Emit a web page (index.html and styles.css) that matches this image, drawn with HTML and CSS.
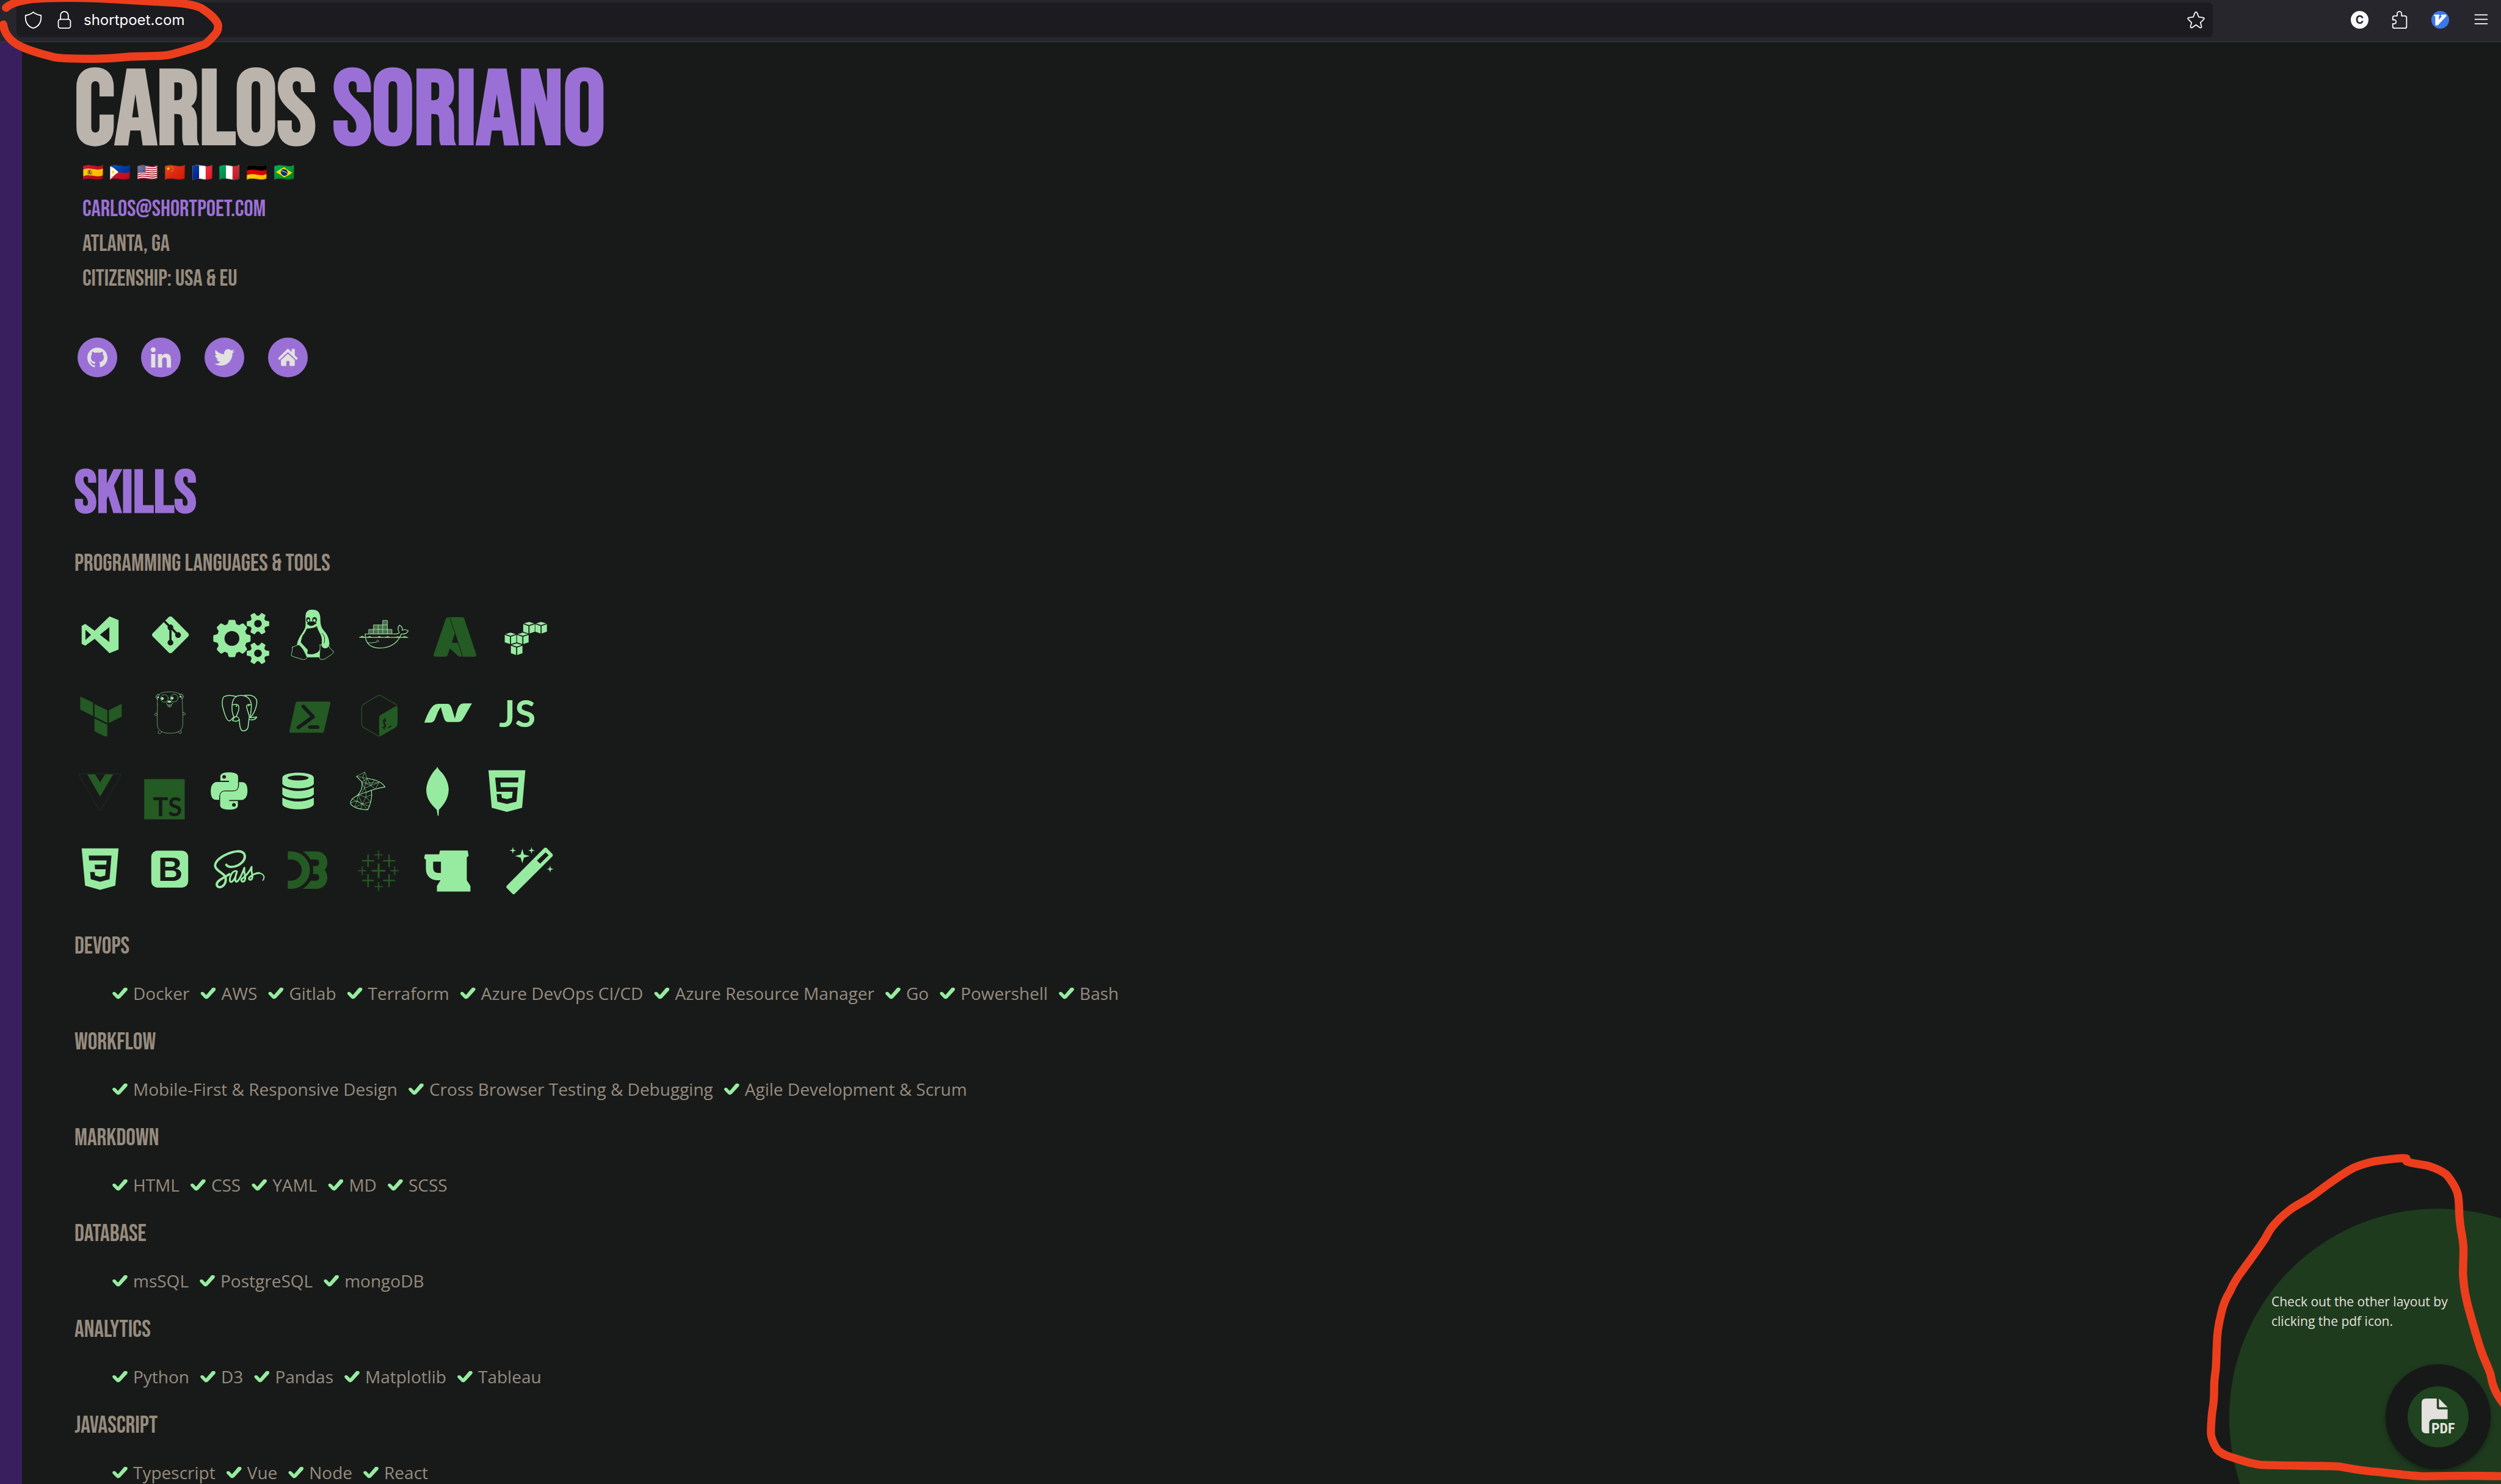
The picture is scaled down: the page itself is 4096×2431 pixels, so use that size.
FILE: index.html
```html
<!DOCTYPE html>
<html lang="en">
<head>
<meta charset="utf-8">
<meta name="viewport" content="width=device-width, initial-scale=1">
<title>Carlos Soriano</title>
<link rel="stylesheet" href="styles.css">
</head>
<body>
<div class="window">
  <header class="toolbar">
    <div class="address">
      <button class="tool" type="button" aria-label="Tracking protection"><svg viewBox="0 0 32 32"><path d="M16 2C20 6 25 7 30 8C31 20 26 28 16 31C6 28 1 20 2 8C7 7 12 6 16 2Z"/></svg></button>
      <button class="tool" type="button" aria-label="Site information"><svg viewBox="0 0 32 32"><path d="M9 15V8a7 7 0 0 1 14 0v7"/><rect x="5" y="15" width="22" height="16" rx="4"/></svg></button>
      <input class="url" type="text" value="shortpoet.com" aria-label="Address">
      <button class="tool" type="button" aria-label="Bookmark this page"><svg viewBox="0 0 32 32"><path d="M14 3.500Q16 0 18 3.500L21 11L29 12Q32 13 30 15L24 21L26 28Q26 31 23 30L16 25L9 30Q6 31 6 28L8 21L2 15Q0 13 3 12L11 11Z"/></svg></button>
    </div>
    <nav class="extensions" aria-label="Extensions">
      <button class="tool" type="button" aria-label="Account"><svg viewBox="0 0 32 32"><circle class="solid" cx="16" cy="16" r="16"/><text class="badge-letter" x="16" y="23">C</text></svg></button>
      <button class="tool" type="button" aria-label="Extensions"><svg viewBox="0 0 32 32"><path d="M3 16V12Q3 9 6 9H11V5a4 4 0 0 1 8 0V9H25Q28 9 28 12V28Q28 31 25 31H6Q3 31 3 28V23H7a4 4 0 0 0 0-7Z"/></svg></button>
      <button class="tool" type="button" aria-label="Vimium"><svg viewBox="0 0 32 32"><circle class="blue" cx="16" cy="16" r="16"/><path class="solid" d="M5 6.500H14.500V9.500H13.500V16L19 9.500H17.500V6.500H27V9.500L11.500 26H7V9.500H5Z"/></svg></button>
      <button class="tool" type="button" aria-label="Menu"><svg viewBox="0 0 32 32"><path d="M6 7H28M6 15H28M6 23H28"/></svg></button>
    </nav>
  </header>

  <div class="page">
    <div class="rail"></div>
    <main class="resume">
      <h1 class="name">Carlos <span class="accent">Soriano</span></h1>
      <div class="contact">
        <div class="flags"><span>🇪🇸</span><span>🇵🇭</span><span>🇺🇸</span><span>🇨🇳</span><span>🇫🇷</span><span>🇮🇹</span><span>🇩🇪</span><span>🇧🇷</span></div>
        <a class="line accent" href="mailto:carlos@shortpoet.com">carlos@shortpoet.com</a>
        <p class="line">Atlanta, GA</p>
        <p class="line">Citizenship: USA &amp; EU</p>
      </div>
      <nav class="social" aria-label="Profiles">
        <a href="#github" aria-label="GitHub"><svg viewBox="0 0 24 24"><path d="M12 .297c-6.63 0-12 5.373-12 12 0 5.303 3.438 9.800 8.205 11.385.6.113.82-.258.82-.577 0-.285-.01-1.040-.015-2.040-3.338.724-4.042-1.610-4.042-1.610C4.422 18.070 3.633 17.700 3.633 17.700c-1.087-.744.084-.729.084-.729 1.205.084 1.838 1.236 1.838 1.236 1.070 1.835 2.809 1.305 3.495.998.108-.776.417-1.305.76-1.605-2.665-.3-5.466-1.332-5.466-5.930 0-1.310.465-2.380 1.235-3.220-.135-.303-.54-1.523.105-3.176 0 0 1.005-.322 3.300 1.230.96-.267 1.980-.399 3-.405 1.020.006 2.040.138 3 .405 2.280-1.552 3.285-1.230 3.285-1.230.645 1.653.24 2.873.12 3.176.765.84 1.230 1.910 1.230 3.220 0 4.610-2.805 5.625-5.475 5.920.42.36.81 1.096.81 2.220 0 1.606-.015 2.896-.015 3.286 0 .315.21.69.825.57C20.565 22.092 24 17.592 24 12.297c0-6.627-5.373-12-12-12"/></svg></a>
        <a href="#linkedin" aria-label="LinkedIn"><svg viewBox="0 0 448 448"><path d="M100.280 448H7.400V148.900h92.880zM53.790 108.100C24.090 108.100 0 83.500 0 53.800a53.790 53.790 0 0 1 107.580 0c0 29.700-24.100 54.300-53.790 54.300zM447.900 448h-92.680V302.400c0-34.700-.7-79.200-48.290-79.200-48.290 0-55.690 37.700-55.690 76.700V448h-92.780V148.900h89.080v40.800h1.300c12.400-23.500 42.690-48.300 87.880-48.300 94 0 111.280 61.900 111.280 142.300V448z"/></svg></a>
        <a href="#twitter" aria-label="Twitter"><svg viewBox="0 0 512 512"><path d="M459.370 151.716c.325 4.548.325 9.097.325 13.645 0 138.720-105.583 298.558-298.558 298.558-59.452 0-114.680-17.219-161.137-47.106 8.447.974 16.568 1.299 25.340 1.299 49.055 0 94.213-16.568 130.274-44.832-46.132-.975-84.792-31.188-98.112-72.772 6.498.974 12.995 1.624 19.818 1.624 9.421 0 18.843-1.300 27.614-3.573-48.081-9.747-84.143-51.980-84.143-102.985v-1.299c13.969 7.797 30.214 12.670 47.431 13.319-28.264-18.843-46.781-51.005-46.781-87.391 0-19.492 5.197-37.360 14.294-52.954 51.655 63.675 129.300 105.258 216.365 109.807-1.624-7.797-2.599-15.918-2.599-24.040 0-57.828 46.782-104.934 104.934-104.934 30.213 0 57.502 12.670 76.670 33.137 23.715-4.548 46.456-13.320 66.599-25.340-7.798 24.366-24.366 44.833-46.132 57.827 21.117-2.273 41.584-8.122 60.426-16.243-14.292 20.791-32.161 39.308-52.628 54.253z"/></svg></a>
        <a href="#home" aria-label="Home"><svg viewBox="0 0 38 38"><path d="M19 3Q20 3 21 4L26 9V4Q26 3 27 3H31Q32 3 32 4V15L37 20Q38 21 37 22L36 23Q35 24 34 23L19 9L4 23Q3 24 2 23L1 22Q0 21 1 20L17 4Q18 3 19 3ZM19 12L32 24V33Q32 35 30 35H22V26H16V35H8Q6 35 6 33V24Z"/></svg></a>
      </nav>

      <section class="skills">
        <h2 class="accent">Skills</h2>
        <h3>Programming Languages &amp; Tools</h3>
        <div class="icons">
          <svg viewBox="44 -9 384 432"><path fill-rule="evenodd" d="M90 157L110 146L162 184L244 105L294 125V288L244 308L162 229L110 267L90 257ZM111 178V235L142 207ZM191 206L243 164V247Z"/></svg>
          <svg viewBox="428 -9 384 432"><path d="M570 109Q580 100 590 109L677 197Q687 207 677 217L590 304Q580 313 570 304L483 217Q473 207 483 197Z"/><path class="cut-line" stroke-width="12" d="M540 125L622 207M580 165V248"/><circle class="cut" cx="580" cy="166" r="16"/><circle class="cut" cx="622" cy="208" r="16"/><circle class="cut" cx="580" cy="250" r="16"/></svg>
          <svg viewBox="812 -9 384 432">
            <g transform="translate(919 227)"><circle r="83"/><path id="tooth8" d="M-25 -76L-19 -98Q-17 -103 -13 -103H13Q17 -103 19 -98L25 -76Z"/><use href="#tooth8" transform="rotate(45)"/><use href="#tooth8" transform="rotate(90)"/><use href="#tooth8" transform="rotate(135)"/><use href="#tooth8" transform="rotate(180)"/><use href="#tooth8" transform="rotate(225)"/><use href="#tooth8" transform="rotate(270)"/><use href="#tooth8" transform="rotate(315)"/><circle class="cut" r="41"/></g>
            <g id="gear6" transform="translate(1063 145)"><circle r="44"/><path id="tooth6" d="M36 -18L60 -13Q62 -12 62 -9V9Q62 12 60 13L36 18Z"/><use href="#tooth6" transform="rotate(60)"/><use href="#tooth6" transform="rotate(120)"/><use href="#tooth6" transform="rotate(180)"/><use href="#tooth6" transform="rotate(240)"/><use href="#tooth6" transform="rotate(300)"/><circle class="cut" r="21"/></g>
            <use href="#gear6" y="164"/>
          </svg>
          <svg viewBox="-124 -9 384 432"><path d="M5 110C5 80 15 68 43 68C72 68 86 82 87 115C87 150 92 165 105 182C125 205 137 225 137 262L100 290L85 331H15L-8 300L-42 262C-38 225 -15 205 0 175C8 160 5 140 5 110Z"/><path class="cut" d="M12 172C35 172 58 168 68 158C75 190 92 200 95 230C97 260 90 290 70 305C50 316 30 316 15 312L17 290L-20 250C-22 225 0 200 12 172Z"/><ellipse class="cut" cx="20" cy="124" rx="11" ry="14"/><ellipse class="cut" cx="55" cy="124" rx="13" ry="15"/><ellipse cx="21" cy="127" rx="6" ry="8"/><ellipse cx="54" cy="127" rx="7" ry="9"/><path class="cut" d="M12 146C20 128 50 130 67 142C60 150 40 160 30 157Z"/><path class="line-art" stroke-width="3" d="M14 154Q35 175 64 150"/><path class="cut-line" stroke-width="3" d="M96 198Q118 215 108 252M-12 250Q-20 225 -6 205"/><path class="cut line-art" stroke-width="3" d="M-68 275C-50 272 -48 262 -28 262C-15 268 5 310 14 330C10 345 -10 345 -15 342C-35 335 -65 328 -73 322C-75 312 -65 300 -68 275Z"/><path class="cut line-art" stroke-width="3" d="M85 262C100 262 110 285 132 262C135 280 150 290 160 298C162 308 145 318 130 328C115 340 100 348 85 340C78 325 88 290 85 262Z"/><ellipse cx="114" cy="267" rx="19" ry="14"/><path d="M-32 262Q-5 272 15 288Q20 300 8 302Z"/></svg>
          <svg viewBox="260 -9 384 432"><path class="line-art" stroke-width="4" d="M334 202H495Q510 203 523 196C510 175 518 160 524 153C535 160 542 172 539 182C552 175 565 180 572 184C567 200 548 204 534 202C515 250 480 280 412 280C360 278 334 250 334 202ZM303 221H570"/><path d="M304 220L318 212L332 220M344 220L358 214L372 220M398 220L412 214L426 220M444 220L458 214L472 220M500 220L514 215L528 220M539 220L553 214L567 220"/><path fill-opacity=".4" d="M355 177H482V202H355ZM380 152H457V177H380ZM431 127H457V152H431Z"/><path class="line-art" stroke-width="3" d="M355 177H482V202H355ZM380 202V152H457V202M431 202V127H457V152M406 152V202"/><circle class="line-art" stroke-width="2" cx="403" cy="241" r="5"/><path class="line-art" stroke-width="3" d="M348 251Q375 253 397 247"/></svg>
          <svg class="dim" viewBox="644 -9 384 432"><path d="M793 109H799L829 200L789 318Q785 328 776 328H720Q708 326 712 315L779 118Q783 109 793 109ZM802 109H870Q878 109 881 117L947 315Q949 328 938 328H868Q872 324 870 315ZM778 251H845L867 315Q868 328 858 328Q853 328 848 324L777 260Q773 254 778 251Z"/></svg>
          <svg viewBox="1028 -9 384 432"><path id="cube" d="M1170 254L1198 263L1170 272L1142 263ZM1138 267L1167 277V318L1138 308ZM1202 267L1173 277V318L1202 308Z"/><use href="#cube" x="-34" y="-60"/><use href="#cube" x="34" y="-60"/><use href="#cube" x="68" y="-119"/><use href="#cube" x="135" y="-119"/></svg>

          <svg class="dim" viewBox="44 423 384 432"><path d="M82 548L153 582V656L82 620ZM161 589L232 624V695L161 659ZM240 624L311 588V659L240 695ZM161 669L232 704V768H217L161 740Z"/></svg>
          <svg viewBox="428 423 384 432"><g class="line-art" stroke-width="2"><path d="M508 590C505 560 510 540 530 528C560 520 600 520 625 530C645 545 647 565 646 600C650 640 648 680 648 705C645 740 620 750 580 751C535 752 512 735 508 710C505 670 508 630 508 590Z"/><path d="M510 564A14 14 0 1 1 520 537M643 562A15 15 0 1 0 628 536" stroke-width="3"/><circle cx="547" cy="558" r="21"/><circle cx="601" cy="556" r="21"/><ellipse cx="575" cy="587" rx="17" ry="9"/><path d="M566 592V603Q575 609 584 603V592M575 592V606M507 640Q490 638 493 650Q500 655 508 650M648 637Q664 636 662 647Q655 653 648 648M515 737Q507 752 520 754Q530 748 534 742M622 742Q630 755 638 752Q645 742 637 735"/></g><circle cx="535" cy="559" r="8"/><circle cx="589" cy="557" r="8"/><ellipse cx="574" cy="576" rx="10" ry="6"/><circle cx="512" cy="552" r="5"/><circle cx="636" cy="549" r="5"/></svg>
          <svg viewBox="812 423 384 432"><g class="line-art" stroke-width="5"><path d="M942 548C920 540 890 540 876 548C862 560 864 600 872 620C880 650 890 682 905 683C915 680 925 665 930 658C917 640 918 600 922 580C928 555 945 542 965 542C1000 540 1022 560 1026 590C1028 620 1022 640 1020 660"/><path d="M985 543C1020 536 1045 545 1055 565C1062 590 1045 640 1022 662"/><path d="M924 594C940 588 955 590 957 605C960 630 945 650 943 658C957 662 962 670 961 690C962 710 965 738 982 738C1005 738 1010 720 1010 700L1014 668C1020 655 1000 620 1000 600C1005 590 1018 590 1025 595"/><path d="M943 660C930 655 930 672 922 680C935 688 955 685 960 675M1018 664C1030 668 1045 660 1056 661C1052 675 1030 680 1016 675"/></g><circle cx="944" cy="600" r="4"/><circle cx="1012" cy="598" r="4"/></svg>
          <svg class="dim" viewBox="-124 423 384 432"><path d="M-38 576H136Q144 576 143 585L107 740Q105 748 97 748H-78Q-86 748 -84 739L-50 585Q-48 576 -38 576Z"/><path class="cut-line" stroke-width="20" d="M-7 603L47 660L-34 719M29 717H72"/></svg>
          <svg class="dim" viewBox="260 423 384 432"><path class="line-art" stroke-width="4" d="M405 543Q412 540 420 543L505 592Q511 600 511 610V700Q510 712 502 717L420 765Q412 769 404 765L322 717Q315 710 315 700V610Q315 598 322 592Z"/><path d="M411 665Q412 655 420 650L500 603Q511 602 511 612V700Q510 712 502 717L420 765Q411 768 411 760Z"/><path class="cut-line" stroke-width="5" d="M449 684Q443 670 434 681C426 698 450 696 448 710Q441 726 430 718M443 668L439 729M463 720L479 710"/></svg>
          <svg viewBox="644 423 384 432"><path d="M660 692C672 660 690 615 712 597Q722 588 735 588H790Q806 589 814 620L829 670C838 640 842 610 855 596Q864 586 880 586H924C905 615 890 650 868 680Q860 689 848 689H790Q775 688 768 665C762 645 757 630 752 607C735 625 730 650 718 676Q710 692 692 692Z"/></svg>
          <svg viewBox="1028 423 384 432"><text class="js" x="1072" y="715">JS</text></svg>

          <svg class="dim" viewBox="44 15 384 432"><path class="line-art" stroke-width="2" opacity=".6" d="M73 136H311L192 341Z"/><path d="M121 138H165L192 183L219 138H264L192 261Z"/></svg>
          <svg class="dim" viewBox="428 15 384 432"><path d="M435 164H659V387H435Z"/><text class="ts cut" x="483" y="368">TS</text></svg>
          <svg viewBox="812 15 384 432"><path id="snake" d="M855 174V148C856 133 875 127 903 127C935 127 952 135 953 150V203Q951 227 928 228H880Q853 230 849 258V279H833C810 279 802 260 802 230C802 200 815 181 835 180H903V174Z"/><use href="#snake" transform="rotate(180 903.500 230)"/><circle class="cut" cx="876" cy="152" r="10"/><circle class="cut" cx="930" cy="307" r="10"/></svg>
          <svg viewBox="1196 15 384 432"><path d="M1197 158C1197 119 1371 119 1371 158V190C1360 224 1208 224 1197 190ZM1197 210Q1284 251 1371 210V248C1355 281 1213 281 1197 248ZM1197 267Q1284 310 1371 267V305C1355 340 1213 340 1197 305Z"/><ellipse class="cut" cx="1284" cy="158" rx="58" ry="14"/></svg>
          <svg viewBox="260 15 384 432"><path class="line-art" stroke-width="4" d="M345 161C385 165 425 180 444 208C400 215 370 225 340 237C295 250 255 270 253 295C255 320 310 335 349 334C365 300 373 260 369 228M286 149L316 180C320 210 315 225 295 250"/><path class="line-art" stroke-width="2" d="M345 161L332 126L286 149L345 161M332 126L320 155M316 180L345 161L330 215L316 180L365 200L345 161M365 200L385 170M365 200L330 215L315 240M365 200L410 183L390 220L365 200M320 155L340 187L410 183M330 215L340 237M295 250L338 265L340 237M338 265L318 302L295 250L290 285L318 302L349 334M290 285L253 295M290 285L275 320L318 302L365 290L338 265L370 250M318 302L310 330M318 302L360 315M295 250L262 275L318 302"/></svg>
          <svg viewBox="644 15 384 432"><path d="M732 95C735 108 748 118 758 130C780 155 795 190 795 225C793 275 765 310 741 334L739 367H734L729 334C700 305 671 275 671 225C672 180 700 135 720 113Q730 105 732 95Z"/></svg>
          <svg viewBox="1028 15 384 432"><path d="M1014 115H1218L1200 323L1116 346L1032 323Z"/><path class="cut" d="M1051 156H1180L1178 183H1080L1082 209H1176L1169 289L1116 302L1063 289L1059 247H1086L1088 268L1116 275L1144 268L1148 234H1059Z"/></svg>

          <svg viewBox="44 447 384 432"><path d="M90 547H294L276 753L192 777L109 753Z"/><path class="cut" d="M129 587H255L244 718L192 732L140 718L137 678H162L164 698L192 705L220 698L223 663H164L162 638H226L228 614H131Z"/></svg>
          <svg viewBox="428 447 384 432"><rect x="474" y="560" width="204" height="204" rx="34"/><text class="boot cut" x="511" y="728">B</text></svg>
          <svg viewBox="812 447 384 432"><path class="line-art" stroke-width="13" d="M888 638C900 655 930 652 955 640C985 622 995 600 988 580C975 555 930 562 895 578C860 592 825 618 826 645C830 670 865 680 880 700C890 720 885 745 865 758C850 765 835 762 835 745C838 722 880 708 905 690"/><path class="line-art" stroke-width="10" d="M940 672C920 672 905 705 908 728C915 745 938 720 947 675C935 705 935 735 945 732C960 725 975 690 988 655C982 690 1003 710 987 728C978 735 968 728 972 718C990 705 1015 680 1028 650C1022 690 1042 700 1028 718C1018 725 1010 718 1015 708C1030 695 1050 683 1070 683"/><path class="line-art" stroke-width="6" d="M1050 686C1085 678 1108 700 1090 724"/></svg>
          <svg class="dim" viewBox="-124 447 384 432"><path d="M-93 564H-74A103 103 0 0 1 -74 771H-93V726H-74A58 58 0 0 0 -74 609H-93ZM-10 564H65C100 564 126 590 126 625Q125 650 111 667Q125 685 126 710C125 745 100 771 65 771H-10Q15 755 33 726H65Q81 724 81 707Q80 690 62 689H46Q50 667 46 645H65Q81 643 81 627Q80 610 65 609H33Q15 580 -10 564Z"/></svg>
          <svg class="dim" viewBox="260 447 384 432"><path d="M403 631H414V711H403ZM370 666H446V676H370ZM346 581H354V651H346ZM317 612H383V620H317ZM462 581H470V651H462ZM433 612H500V620H433ZM346 690H354V761H346ZM317 721H383V729H317ZM462 690H470V761H462ZM433 721H500V729H433ZM405 559H411V608H405ZM386 580H431V586H386ZM405 734H411V784H405ZM386 756H431V762H386ZM315 647H321V696H315ZM295 668H340V674H295ZM494 647H500V696H494ZM474 668H520V674H474Z"/></svg>
          <svg viewBox="644 447 384 432"><path fill-rule="evenodd" d="M664 580H742L747 559H900L905 589L895 597V724L915 755V786H730V755L750 724H730C695 722 669 700 669 660V610L659 602ZM709 621V655Q709 680 735 683H752V621Z"/></svg>
          <svg viewBox="1028 447 384 432"><path fill-rule="evenodd" d="M1322 546Q1329 540 1336 546L1367 578Q1373 586 1367 592L1160 798Q1153 805 1146 798L1116 768Q1109 760 1116 753ZM1330 569L1282 615L1300 632L1347 585Z"/><path d="M1201 550L1210 581L1241 590L1210 599L1201 630L1192 599L1161 590L1192 581ZM1149 540L1153 555L1168 559L1153 563L1149 578L1145 563L1130 559L1145 555ZM1252 540L1256 555L1271 559L1256 563L1252 578L1248 563L1233 559L1248 555ZM1355 643L1359 658L1374 662L1359 666L1355 681L1351 666L1336 662L1351 658Z"/></svg>
        </div>

        <h3>DevOps</h3>
        <ul class="list"><li>Docker</li><li>AWS</li><li>Gitlab</li><li>Terraform</li><li>Azure DevOps CI/CD</li><li>Azure Resource Manager</li><li>Go</li><li>Powershell</li><li>Bash</li></ul>
        <h3>Workflow</h3>
        <ul class="list"><li>Mobile-First &amp; Responsive Design</li><li>Cross Browser Testing &amp; Debugging</li><li>Agile Development &amp; Scrum</li></ul>
        <h3>Markdown</h3>
        <ul class="list"><li>HTML</li><li>CSS</li><li>YAML</li><li>MD</li><li>SCSS</li></ul>
        <h3>Database</h3>
        <ul class="list"><li>msSQL</li><li>PostgreSQL</li><li>mongoDB</li></ul>
        <h3>Analytics</h3>
        <ul class="list"><li>Python</li><li>D3</li><li>Pandas</li><li>Matplotlib</li><li>Tableau</li></ul>
        <h3>Javascript</h3>
        <ul class="list"><li>Typescript</li><li>Vue</li><li>Node</li><li>React</li></ul>
      </section>
    </main>
  </div>

  <aside class="tip"><p>Check out the other layout by clicking the pdf icon.</p></aside>
  <button class="pdf" type="button" aria-label="PDF layout"><svg viewBox="0 0 62 64"><path d="M0 8Q0 0 8 0H28V16Q28 20 32 20H48V38H22Q14 38 14 46V64H8Q0 64 0 56ZM32 0L48 16H32Z"/><text class="pdf-label" x="18" y="64">PDF</text></svg></button>

  <svg class="marker" viewBox="0 0 4604 2732" aria-hidden="true">
    <path d="M11 14C20 6 35 1 60 -2C110 -6 180 -4 240 0L325 5C345 7 362 10 371 15C378 20 395 30 401 44C403 54 398 62 392 67C386 74 382 79 375 82C355 88 330 97 310 101C290 104 260 103 240 104C220 106 200 108 172 108C140 108 110 108 100 105C75 99 55 93 40 86C20 77 8 62 6 45"/>
    <path d="M4430 2133C4424 2131 4408 2133 4385 2136C4365 2138 4352 2142 4335 2149C4320 2156 4306 2166 4292 2176C4278 2185 4266 2196 4252 2205C4240 2213 4228 2218 4216 2227C4203 2237 4192 2247 4182 2260C4175 2269 4172 2278 4166 2286C4153 2306 4138 2325 4126 2342C4117 2354 4111 2364 4105 2378C4096 2392 4092 2404 4089 2418C4085 2434 4081 2452 4081 2475C4080 2490 4080 2506 4079 2519C4078 2530 4076 2540 4076 2551C4076 2562 4076 2570 4075 2580C4074 2592 4071 2604 4071 2616C4070 2624 4070 2632 4070 2640C4071 2650 4076 2660 4081 2668C4088 2676 4096 2679 4105 2682C4124 2688 4142 2695 4162 2697C4210 2699 4258 2698 4306 2700C4326 2704 4345 2707 4364 2709C4396 2711 4430 2717 4461 2718C4510 2717 4560 2717 4620 2718"/>
    <path d="M4430 2133V2138C4442 2143 4458 2143 4472 2147C4484 2151 4496 2156 4504 2163C4513 2174 4520 2184 4524 2197C4528 2212 4526 2230 4528 2245C4529 2264 4535 2282 4535 2301C4535 2316 4534 2330 4534 2346C4535 2360 4536 2373 4539 2386C4542 2404 4549 2424 4554 2443C4559 2460 4563 2475 4569 2491C4574 2505 4581 2518 4585 2531C4588 2552 4595 2568 4610 2586"/>
  </svg>
</div>
</body>
</html>
```
FILE: styles.css
```css
* { box-sizing: border-box; }

body {
  margin: 0;
  background: #181a19;
  color: #978b7e;
  font: 28px/40px "Open Sans", sans-serif;
}

h1, h2, h3, p, ul { margin: 0; padding: 0; }
a { color: inherit; text-decoration: none; }
button { border: 0; padding: 0; background: none; color: inherit; }

.window {
  position: relative;
  display: flex;
  flex-direction: column;
  height: 100vh;
  overflow: hidden;
}

/* Browser toolbar */
.toolbar {
  display: flex;
  flex: none;
  align-items: flex-start;
  padding: 4px 19px 7px 27px;
  background: #27262c;
  border-bottom: 1px solid #3a393f;
  color: #fbfbfe;
}
.address {
  display: flex;
  flex: 1;
  align-items: center;
  height: 57px;
  padding: 0 13px;
  gap: 22px;
  border-radius: 8px;
  background: #1c1b20;
}
.url {
  flex: 1;
  min-width: 0;
  margin-left: -5px;
  padding: 0;
  border: 0;
  background: none;
  color: #fbfbfe;
  font: 24px/32px Inter, sans-serif;
}
.extensions {
  display: flex;
  align-items: center;
  height: 57px;
  margin-left: 226px;
  gap: 37px;
}
.tool { flex: none; width: 29px; height: 29px; }
.tool svg {
  display: block;
  width: 29px;
  height: 29px;
  overflow: visible;
  fill: none;
  stroke: #fbfbfe;
  stroke-width: 2;
  stroke-linecap: round;
  stroke-linejoin: round;
}
.tool .solid { fill: #fbfbfe; stroke: none; }
.tool .blue { fill: #3b78e7; stroke: none; }
.badge-letter {
  fill: #27262c;
  stroke: none;
  font: 700 20px Inter, sans-serif;
  text-anchor: middle;
}

/* Resume */
.page { display: flex; flex: 1; min-height: 0; }
.rail { flex: none; width: 36px; background: #3a1f5e; }
.resume { flex: 1; padding: 32px 86px 0; }
.accent { color: #9b70d6; }

h1, h2, h3, .line {
  font-family: "Bebas Neue", "Open Sans Condensed", "Roboto Condensed", sans-serif;
  text-transform: uppercase;
}
.name {
  color: #bbb4ac;
  font-size: 172px;
  font-weight: 700;
  line-height: 166px;
}
.contact {
  display: flex;
  flex-direction: column;
  align-items: flex-start;
  padding-left: 13px;
}
.flags {
  display: flex;
  justify-content: space-between;
  width: 348px;
  margin-bottom: 15px;
  font: 28px/32px "Noto Color Emoji", sans-serif;
}
.line { font-size: 38px; line-height: 57px; }

.social { display: flex; gap: 39px; margin-top: 68px; padding-left: 5px; }
.social a {
  display: grid;
  place-items: center;
  width: 65px;
  height: 65px;
  border-radius: 50%;
  background: #9b70d6;
}
.social svg { width: 33px; height: 33px; fill: #e3e1dd; }

.skills { margin-top: 142px; }
h2 { font-size: 98px; font-weight: 700; line-height: 100px; margin-bottom: 44px; }
h3 { font-size: 39px; font-weight: 400; line-height: 40px; }

.icons {
  display: grid;
  grid-template-columns: repeat(7, 114px);
  margin: 32px 0 43px -2px;
}
.icons svg {
  display: block;
  width: 114px;
  height: 128px;
  overflow: visible;
  fill: #97eba0;
  stroke: none;
}
.icons .dim { fill: #245a24; }
.icons .line-art { fill: none; stroke: #97eba0; stroke-linecap: round; stroke-linejoin: round; }
.icons .dim .line-art { stroke: #245a24; }
.icons .cut { fill: #181a19; }
.icons .cut-line { fill: none; stroke: #181a19; stroke-linecap: round; stroke-linejoin: round; }
.js { font: 700 208px Lato, sans-serif; }
.ts { font: 700 140px Lato, sans-serif; }
.boot { font: 700 190px "Liberation Sans", sans-serif; }

.list {
  display: flex;
  gap: 18px;
  margin: 36px 0 41px;
  padding-left: 62px;
  list-style: none;
}
.list li { display: flex; align-items: center; gap: 9px; white-space: nowrap; }
.list li::before {
  content: "";
  width: 25px;
  height: 19px;
  background: #97eba0;
  clip-path: polygon(0 49%, 5% 41%, 13% 38%, 21% 43%, 37% 66%, 78% 3%, 87% 0, 96% 5%, 100% 15%, 97% 26%, 50% 93%, 38% 100%, 28% 95%, 3% 61%);
}

/* Hint in the corner */
.tip {
  position: absolute;
  right: -238px;
  bottom: -232px;
  width: 683px;
  height: 683px;
  padding: 136px 0 0 69px;
  border-radius: 50%;
  background: #1f3b1e;
  color: #e3e1dd;
  font-size: 21px;
  line-height: 32px;
}
.tip p { width: 312px; }
.pdf {
  position: absolute;
  right: 17px;
  bottom: 24px;
  width: 172px;
  height: 172px;
  padding: 0 0 4px 1px;
  border: 36px solid #171818;
  border-radius: 50%;
  background: #1f441f;
  box-shadow: 0 3px 8px rgba(0, 0, 0, .4);
}
.pdf svg { display: block; width: 55px; height: 57px; margin: 0 auto; fill: #e3e1dd; overflow: visible; }
.pdf-label { font: 700 27px "Roboto Condensed", Roboto, sans-serif; }

/* Hand-drawn marker strokes */
.marker {
  position: absolute;
  inset: 0;
  width: 100%;
  height: 100%;
  fill: none;
  stroke: #ec3e1c;
  stroke-width: 15;
  stroke-linecap: round;
  stroke-linejoin: round;
  pointer-events: none;
}
```
